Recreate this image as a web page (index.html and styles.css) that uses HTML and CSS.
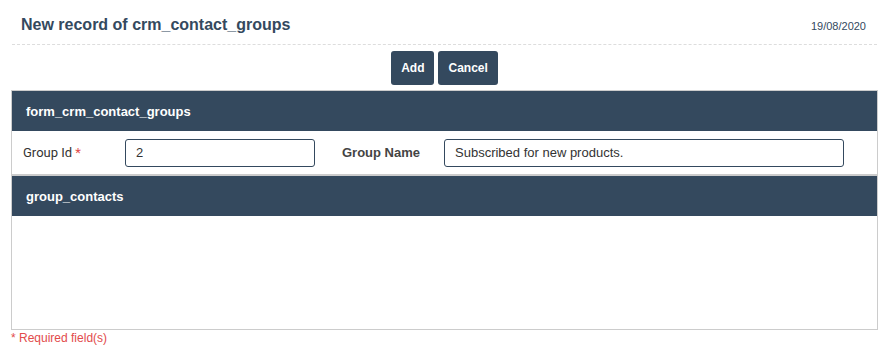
FILE: index.html
```html
<!DOCTYPE html>
<html lang="en">
<head>
    <meta charset="UTF-8">
    <title>New record of crm_contact_groups</title>
    <link rel="stylesheet" href="styles.css">
</head>
<body>
    <div class="page-header">
        <h1 class="page-title">New record of crm_contact_groups</h1>
        <span class="page-date">19/08/2020</span>
    </div>

    <div class="toolbar">
        <button class="btn">Add</button>
        <button class="btn">Cancel</button>
    </div>

    <div class="form-box">
        <div class="block-title">form_crm_contact_groups</div>
        <div class="form-row">
            <label class="field-label">Group Id <span class="req">*</span></label>
            <input class="field-input field-short" type="text" value="2">
            <label class="field-label field-label-2">Group Name</label>
            <input class="field-input field-long" type="text" value="Subscribed for new products.">
        </div>
        <div class="block-title block-title-2">group_contacts</div>
        <div class="block-body"></div>
    </div>

    <div class="required-note">* Required field(s)</div>
</body>
</html>
```

FILE: styles.css
```css
:root {
    --dark-blue: #34495e;
    --border-gray: #cccccc;
    --req-red: #e24b4b;
}

* {
    margin: 0;
    padding: 0;
    box-sizing: border-box;
}

body {
    font-family: "Liberation Sans", Arial, sans-serif;
    background-color: white;
    color: var(--dark-blue);
}

.page-header {
    display: flex;
    justify-content: space-between;
    align-items: flex-end;
    height: 45px;
    margin: 0 12px;
    padding: 0 11px 10px 9px;
    border-bottom: 1px dashed #dddddd;
}

.page-title {
    font-size: 16px;
    font-weight: 700;
    line-height: 19px;
}

.page-date {
    font-size: 11px;
    line-height: 14px;
    margin-bottom: 1px;
}

.toolbar {
    display: flex;
    justify-content: center;
    gap: 4px;
    margin-top: 6px;
}

.btn {
    background-color: var(--dark-blue);
    color: white;
    border: none;
    border-radius: 3px;
    height: 34px;
    padding: 0 10px;
    font-family: "Liberation Sans", Arial, sans-serif;
    font-size: 12px;
    font-weight: 700;
    cursor: pointer;
}

.form-box {
    margin: 5px 11px 0 11px;
    width: 867px;
    border: 1px solid var(--border-gray);
}

.block-title {
    background-color: var(--dark-blue);
    color: white;
    height: 40px;
    display: flex;
    align-items: center;
    padding-left: 14px;
    font-size: 13px;
    font-weight: 700;
}

.form-row {
    display: flex;
    align-items: center;
    height: 45px;
    padding-left: 11px;
    border-bottom: 2px solid var(--border-gray);
}

.field-label {
    width: 102px;
    font-family: Roboto, "Liberation Sans", Arial, sans-serif;
    font-size: 13px;
    color: #333333;
}

.field-label-2 {
    margin-left: 27px;
    font-family: "Liberation Sans", Arial, sans-serif;
    font-weight: 700;
    color: #444444;
}

.req {
    color: var(--req-red);
}

.field-input {
    height: 28px;
    border: 1px solid var(--dark-blue);
    border-radius: 3px;
    padding: 0 10px;
    font-family: "Liberation Sans", Arial, sans-serif;
    font-size: 13px;
    color: #333333;
}

.field-short {
    width: 190px;
}

.field-long {
    width: 400px;
}

.block-body {
    height: 113px;
}

.required-note {
    margin: 1px 11px 0 11px;
    font-size: 12px;
    color: var(--req-red);
}
```
